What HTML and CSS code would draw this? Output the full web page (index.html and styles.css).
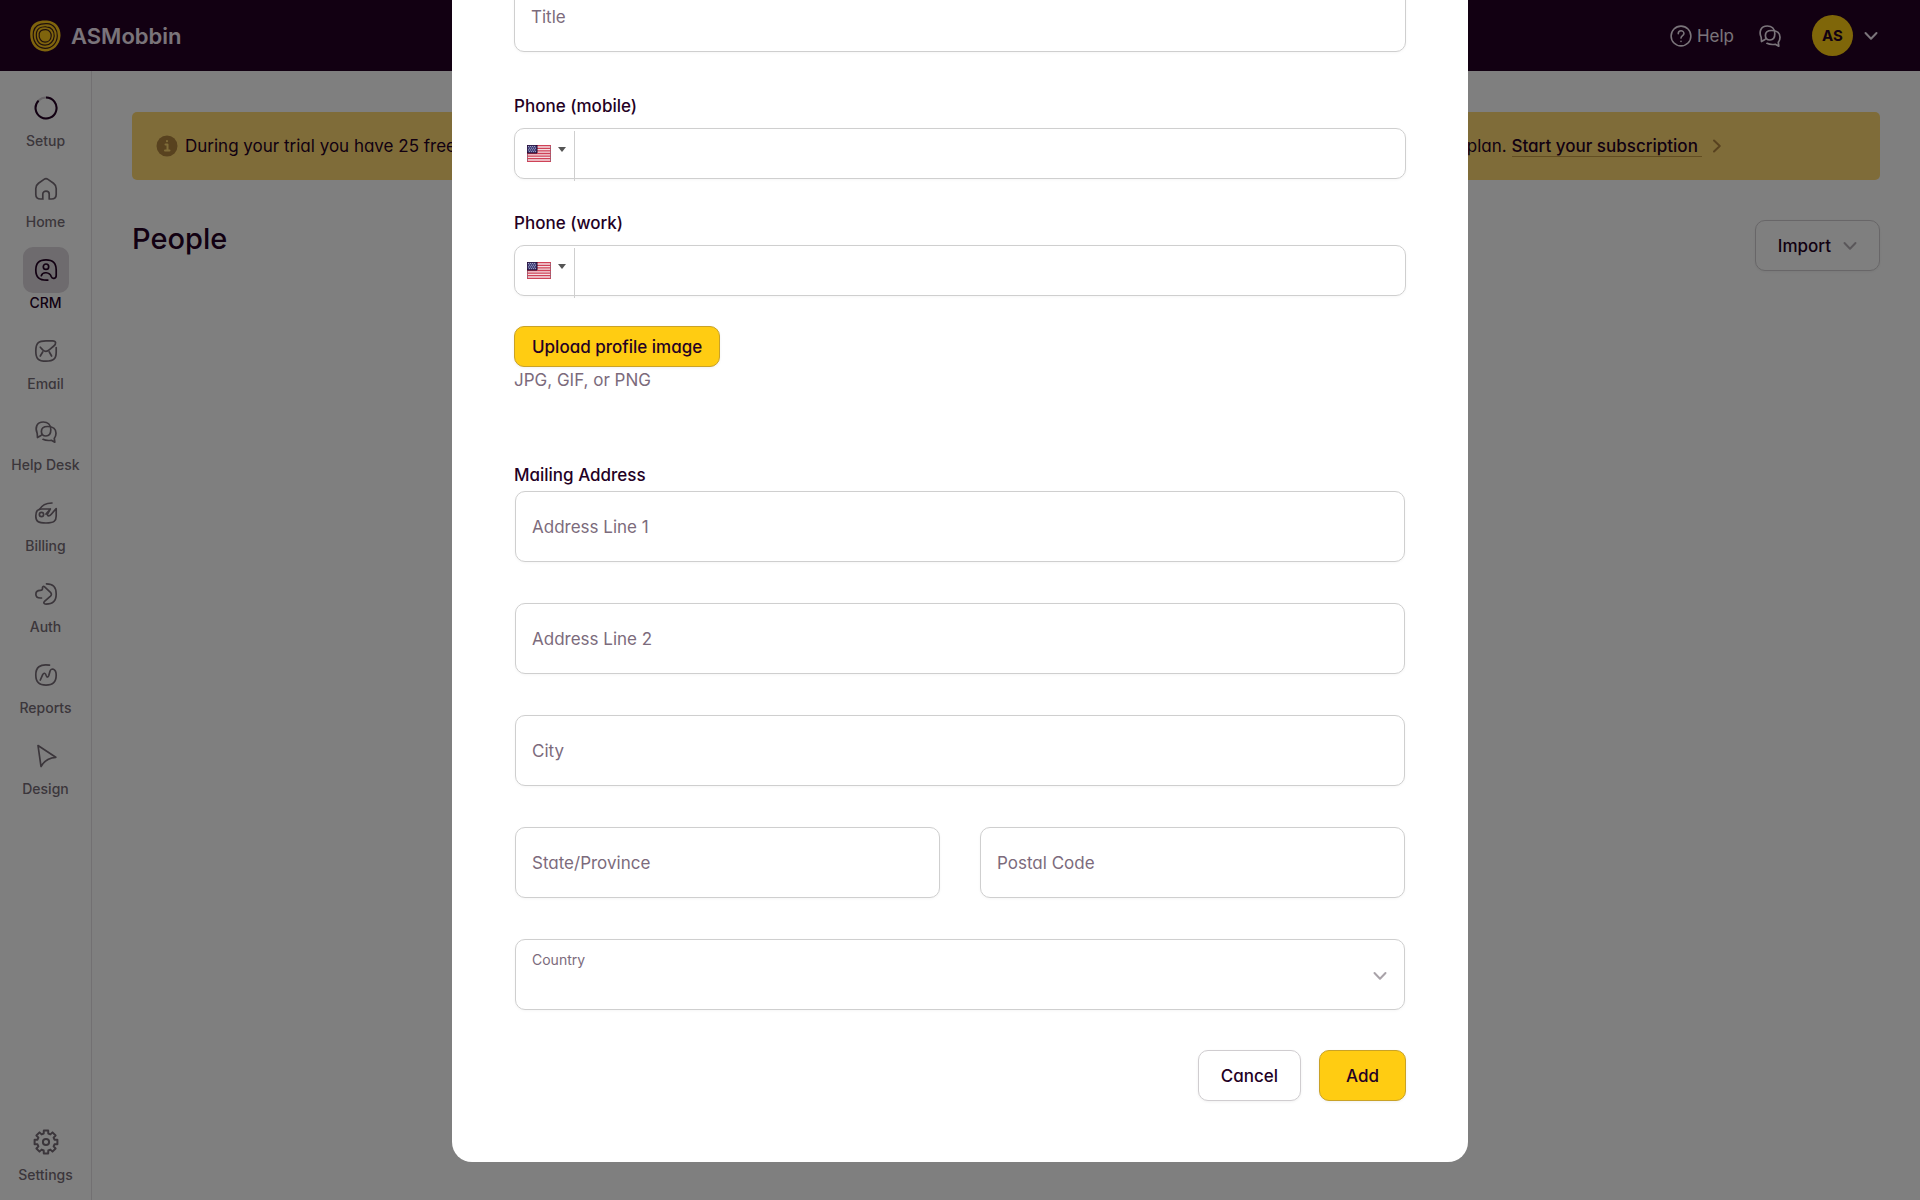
FILE: index.html
```html
<!DOCTYPE html>
<html lang="en">
<head>
    <meta charset="UTF-8">
    <meta name="viewport" content="width=device-width, initial-scale=1.0">
    <title>People - ASMobbin</title>
    <link rel="stylesheet" href="styles.css">
</head>
<body>

    <!-- Shared icons -->
    <svg class="sprite" aria-hidden="true">
        <symbol id="chat" viewBox="0 0 24 24">
            <path d="M7 15.5L3.5 17.5L3.2 13.5C.8 8 2.5 2 9.3 2C13.5 2 16.8 4.5 16.8 9.8C16.8 13.8 15 16 12 16C9 16 7.4 14 7.4 11.5C7.4 8.5 9.5 6.5 13.5 6.5C19.5 6.5 22 9.5 22 13.3C22 15.5 21.5 17 20.3 18.3L20.8 22.2L17.3 20.3C14 20.8 11.5 20.6 9 19.3"/>
        </symbol>
        <symbol id="down" viewBox="0 0 14 14">
            <path d="M1.5 4L7 9.8L12.5 4"/>
        </symbol>
        <symbol id="flag" viewBox="0 0 24 17">
            <rect width="24" height="17" fill="#f4dfe2"/>
            <path d="M0 .7H24M0 3.3H24M0 5.9H24M0 8.5H24M0 11.1H24M0 13.7H24M0 16.3H24" stroke="#cf4257" stroke-width="1.3"/>
            <rect width="10" height="8" fill="#43437c"/>
            <path d="M1 1.5H9M2 3.2H9M1 4.9H9M2 6.6H9" stroke="#b9b9d4" stroke-width=".8" stroke-dasharray="1 1"/>
        </symbol>
    </svg>

    <header class="topbar">
        <a class="brand" href="#">
            <svg class="logo" viewBox="-16 -16 32 32">
                <path class="logo-fill" d="M-14.5-6C-13-14-5-16 2-15.500C11-15 16-8 15.500 0C15 9 8 15.500 0 15.500C-10 15-16.500 6-14.500-6Z"/>
                <g class="logo-rings">
                    <path d="M-11.500-4.500C-10-11-4-12.500 2-12.300C9-12 12.500-6 12.300 0C12 7 7 12.400 0 12.300C-8 12-13 5-11.500-4.500Z"/>
                    <path d="M-8.500-3.500C-7.500-8-3-9.500 1.500-9.200C6.500-9 9.400-5 9.200 0C9 5 5 9.300 0 9.200C-6 9-9.600 4-8.500-3.500Z"/>
                    <path d="M-5.800-2.500C-5-5.500-2-6.400 1-6.300C4.500-6 6.400-3 6.200 0C6 3.500 3.500 6.200 0 6.200C-4 6-6.500 2.500-5.800-2.500Z"/>
                </g>
            </svg>
            ASMobbin
        </a>
        <nav class="tools">
            <a class="help" href="#">
                <svg class="icon" viewBox="0 0 24 24">
                    <circle cx="12" cy="12" r="10.800"/>
                    <path d="M9 9.500C9 5.300 15.200 5.400 15.200 9.300C15.200 11.700 12 11.700 12 14.300"/>
                    <path d="M12 17.800V18"/>
                </svg>
                Help
            </a>
            <a class="chat" href="#" aria-label="Messages"><svg class="icon"><use href="#chat"/></svg></a>
            <button class="account" type="button" aria-label="Account">
                <span class="avatar">AS</span>
                <svg class="chevron"><use href="#down"/></svg>
            </button>
        </nav>
    </header>

    <div class="layout">
        <nav class="sidebar">
            <a class="item" href="#">
                <span class="item-icon">
                    <svg class="icon setup" viewBox="0 0 24 24">
                        <circle class="track" cx="12" cy="12" r="10.500"/>
                        <path d="M12 1.500A10.500 10.500 0 1 1 4.600 4.600"/>
                    </svg>
                </span>
                Setup
            </a>
            <a class="item" href="#">
                <span class="item-icon">
                    <svg class="icon" viewBox="0 0 24 24">
                        <path d="M9 22H6.500C3.500 22 1.800 20.500 1.800 17.500V11.500C1.800 9 2.800 7.600 4.500 6.300L10 2.400C11.300 1.500 12.700 1.500 14 2.400L19.500 6.300C21.200 7.600 22.200 9 22.200 11.500V17.500C22.200 20.500 20.500 22 17.500 22H15.200V17C15.200 13.200 8.800 13.200 8.800 17V22"/>
                    </svg>
                </span>
                Home
            </a>
            <a class="item active" href="#">
                <span class="item-icon">
                    <svg class="icon" viewBox="0 0 24 24">
                        <circle cx="12" cy="8.700" r="2.700"/>
                        <path d="M13.800 22.100C5 22.500 1.800 19 1.800 12C1.800 5 5 1.800 12 1.800C19 1.800 22.200 5 22.200 12V17.500C22.200 20.800 18.300 21.500 17.200 18.500C15.600 13.800 8.600 13.500 7.300 17.700"/>
                    </svg>
                </span>
                CRM
            </a>
            <a class="item" href="#">
                <span class="item-icon">
                    <svg class="icon" viewBox="0 0 24 24">
                        <path d="M22.200 8.500V13C22.200 20 19.500 22.200 12 22.200C4.500 22.200 1.800 20 1.800 12C1.800 4 4.500 1.800 12 1.800H18.500C22.500 1.800 22.300 5 19.800 7L15.500 10.700C13 13 11 13 8.700 10.900L6.300 8.200M6.300 17L8.700 13M17.600 17L15.300 13"/>
                    </svg>
                </span>
                Email
            </a>
            <a class="item" href="#">
                <span class="item-icon"><svg class="icon"><use href="#chat"/></svg></span>
                Help Desk
            </a>
            <a class="item" href="#">
                <span class="item-icon">
                    <svg class="icon" viewBox="0 0 24 24">
                        <circle cx="7.500" cy="13.500" r="2.100"/>
                        <path d="M5.500 8.500C8 4 11 2.200 18 2"/>
                        <path d="M12 13L16.300 8H8C3.500 8 1.800 10 1.800 15C1.800 20.500 4 22 12 22C20 22 22.200 20 22.200 15V7.500L17.300 13.200C15.500 15.300 13 15.500 13.500 13L16.300 8"/>
                    </svg>
                </span>
                Billing
            </a>
            <a class="item" href="#">
                <span class="item-icon">
                    <svg class="icon" viewBox="0 0 24 24">
                        <path d="M7.500 16H6.300C.4 16 .4 8.400 6.300 8.400C8 8.400 8.500 8 8.500 6.800V5.600C8.500 4.400 9.700 4 10.600 4.800L16.500 10.300C17.700 11.500 17.700 12.900 16.500 14.100L10.500 19.300C9.200 20.500 9.800 22.200 12 22.200C19 22.200 22.200 19 22.200 12C22.200 5 19 1.800 12.500 1.800"/>
                    </svg>
                </span>
                Auth
            </a>
            <a class="item" href="#">
                <span class="item-icon">
                    <svg class="icon" viewBox="0 0 24 24">
                        <path d="M15.500 2.200C5.500 .8 1.800 4.500 1.800 12C1.800 19 5 22.200 12 22.200C19 22.200 22.200 19 22.200 12C22.200 5.500 17 4.300 15.900 8.500L14.800 12.500C14.200 14.500 13 14.500 12.300 12.700C11.300 9.800 9.800 9.500 8.700 11.700L6.300 17"/>
                    </svg>
                </span>
                Reports
            </a>
            <a class="item" href="#">
                <span class="item-icon">
                    <svg class="icon" viewBox="0 0 24 24">
                        <path d="M4 1.500L21.800 13.300C16 13.800 10.500 16 7 22.500Z"/>
                    </svg>
                </span>
                Design
            </a>
            <a class="item settings" href="#">
                <span class="item-icon">
                    <svg class="icon gear" viewBox="-13 -13 26 26">
                        <circle r="3.100"/>
                        <path d="M8.500-2.300L11.400-2.200V2.200L8.500 2.300L7.600 4.400L9.600 6.500L6.500 9.600L4.400 7.600L2.300 8.500L2.200 11.400H-2.200L-2.300 8.500L-4.400 7.600L-6.500 9.600L-9.600 6.500L-7.600 4.400L-8.500 2.300L-11.400 2.200V-2.200L-8.500-2.300L-7.600-4.400L-9.600-6.500L-6.500-9.600L-4.400-7.600L-2.300-8.500L-2.200-11.400H2.200L2.300-8.500L4.400-7.600L6.500-9.600L9.600-6.500L7.600-4.400Z"/>
                    </svg>
                </span>
                Settings
            </a>
        </nav>

        <main class="content">
            <div class="banner">
                <svg class="info" viewBox="0 0 22 22">
                    <circle cx="11" cy="11" r="10.500"/>
                    <path d="M9.500 9.500H11.500V15.500M9 15.500H13.500M11 6V6.300"/>
                </svg>
                <p>During your trial you have 25 free emails you can send to your contacts. To send unlimited emails and remove these limits, you will need to subscribe to a paid plan. <a href="#">Start your subscription&nbsp;</a></p>
                <svg class="chevron next"><use href="#down"/></svg>
            </div>
            <div class="page-head">
                <h1>People</h1>
                <button class="btn import" type="button">Import <svg class="chevron"><use href="#down"/></svg></button>
            </div>
        </main>
    </div>

    <!-- Add person dialog -->
    <div class="overlay">
        <form class="modal" role="dialog" aria-label="Add person">
            <input class="field" type="text" placeholder="Title" aria-label="Title">

            <div class="phones">
                <div>
                    <label for="mobile">Phone (mobile)</label>
                    <div class="phone">
                        <button class="country-code" type="button" aria-label="United States">
                            <svg class="flag"><use href="#flag"/></svg>
                            <span class="caret"></span>
                        </button>
                        <input type="tel" id="mobile">
                    </div>
                </div>
                <div>
                    <label for="work">Phone (work)</label>
                    <div class="phone">
                        <button class="country-code" type="button" aria-label="United States">
                            <svg class="flag"><use href="#flag"/></svg>
                            <span class="caret"></span>
                        </button>
                        <input type="tel" id="work">
                    </div>
                </div>
            </div>

            <button class="btn primary upload" type="button">Upload profile image</button>
            <p class="hint">JPG, GIF, or PNG</p>

            <fieldset class="address">
                <legend>Mailing Address</legend>
                <div class="address-grid">
                    <input class="field wide" type="text" placeholder="Address Line 1" aria-label="Address Line 1">
                    <input class="field wide" type="text" placeholder="Address Line 2" aria-label="Address Line 2">
                    <input class="field wide" type="text" placeholder="City" aria-label="City">
                    <input class="field" type="text" placeholder="State/Province" aria-label="State/Province">
                    <input class="field" type="text" placeholder="Postal Code" aria-label="Postal Code">
                    <div class="country wide">
                        <label for="country">Country</label>
                        <select class="field" id="country">
                            <option></option>
                        </select>
                        <svg class="chevron"><use href="#down"/></svg>
                    </div>
                </div>
            </fieldset>

            <div class="actions">
                <button class="btn" type="button">Cancel</button>
                <button class="btn primary add" type="submit">Add</button>
            </div>
        </form>
    </div>

</body>
</html>
```
FILE: styles.css
```css
* {
    box-sizing: border-box;
}
body {
    margin: 0;
    min-height: 100vh;
    display: flex;
    flex-direction: column;
    font-family: Inter, sans-serif;
    font-feature-settings: "cv11";
    font-size: 17px;
    line-height: 24px;
    color: #240024;
    background: #fff;
}
a {
    color: inherit;
    text-decoration: none;
}
button, input, select {
    font: inherit;
    font-feature-settings: inherit;
    color: inherit;
}
svg {
    fill: none;
    stroke: currentColor;
    stroke-linecap: round;
    stroke-linejoin: round;
    flex-shrink: 0;
}
.sprite {
    display: none;
}
.icon {
    width: 24px;
    height: 24px;
    stroke-width: 1.7;
}
.chevron {
    width: 14px;
    height: 14px;
    stroke-width: 2;
}

/* Top bar */
.topbar {
    display: flex;
    align-items: center;
    justify-content: space-between;
    height: 71px;
    padding: 0 42px 0 29px;
    background: #240024;
    color: #f5e9f5;
}
.brand {
    display: flex;
    align-items: center;
    gap: 10px;
    font-size: 22px;
    font-weight: 600;
}
.logo {
    width: 32px;
    height: 32px;
}
.logo-fill {
    fill: #ffc81a;
    stroke: none;
}
.logo-rings {
    stroke: #3d1f1a;
    stroke-width: 1.2;
}
.tools, .help, .account {
    display: flex;
    align-items: center;
}
.help {
    gap: 5px;
}
.help .icon {
    width: 22px;
    height: 22px;
}
.chat {
    display: flex;
    margin: 0 30px 0 24px;
}
.account {
    gap: 11px;
    padding: 0;
    border: none;
    background: none;
}
.avatar {
    width: 41px;
    border-radius: 50%;
    background: #ffcc12;
    color: #240024;
    font-size: 15px;
    font-weight: 700;
    line-height: 41px;
    text-align: center;
}

/* Sidebar */
.layout {
    flex: 1;
    display: flex;
}
.sidebar {
    width: 92px;
    display: flex;
    flex-direction: column;
    gap: 15px;
    padding: 14px 0 15px;
    border-right: 1px solid #e4e0e4;
}
.item {
    display: flex;
    flex-direction: column;
    align-items: center;
    color: #776d77;
    font-size: 14px;
    font-weight: 500;
    line-height: 20px;
}
.item-icon {
    display: flex;
    align-items: center;
    justify-content: center;
    width: 46px;
    height: 46px;
    border-radius: 10px;
}
.item.active {
    color: #240024;
}
.item.active .item-icon {
    background: #dcd6dc;
}
.setup {
    color: #240024;
    stroke-width: 2;
    stroke-linecap: butt;
}
.track {
    stroke: #cfc9cf;
}
.gear {
    width: 26px;
    height: 26px;
    stroke-width: 2;
}
.settings {
    margin-top: auto;
}

/* Page content */
.content {
    flex: 1;
    padding: 41px 40px 0;
}
.banner {
    display: flex;
    align-items: center;
    min-height: 68px;
    padding: 0 24px;
    border-radius: 5px;
    background: #ffd973;
}
.info {
    width: 22px;
    height: 22px;
    margin-right: 7px;
    stroke: #ffd973;
    stroke-width: 2;
}
.info circle {
    fill: #b0853f;
    stroke: none;
}
.banner p {
    margin: 0;
    white-space: nowrap;
}
.banner a {
    font-weight: 500;
    border-bottom: 1px solid #c79d45;
}
.next {
    margin-left: 8px;
    color: #b0853f;
    transform: rotate(-90deg);
}
.page-head {
    display: flex;
    align-items: flex-start;
    justify-content: space-between;
    padding-top: 40px;
}
h1 {
    margin: 0;
    font-size: 29px;
    font-weight: 500;
    line-height: 38px;
}
.btn {
    height: 51px;
    padding: 0 22px;
    border: 1px solid #d0cdd0;
    border-radius: 10px;
    background: #fff;
    box-shadow: 0 1px 3px rgba(0, 0, 0, 0.06);
    font-weight: 500;
}
.import {
    display: flex;
    align-items: center;
    gap: 12px;
}
.import .chevron {
    color: #b5afb5;
}

/* Dialog */
.overlay {
    position: fixed;
    inset: 0;
    display: flex;
    align-items: flex-end;
    justify-content: center;
    padding-bottom: 38px;
    overflow: hidden;
    background: rgba(0, 0, 0, 0.5);
}
.modal {
    width: 100%;
    max-width: 1016px;
    padding: 61px 62px;
    border-radius: 20px;
    background: #fff;
}
.field {
    display: block;
    width: 100%;
    height: 71px;
    padding: 0 16px;
    border: 1px solid #cfcfcf;
    border-radius: 10px;
    background: #fff;
    box-shadow: 0 1px 3px rgba(0, 0, 0, 0.04);
}
.field::placeholder {
    color: #7c6b7c;
    opacity: 1;
}
.phones {
    display: grid;
    gap: 32px;
    margin: 42px 0 30px;
    font-weight: 500;
}
.phones label {
    display: block;
    margin-bottom: 10px;
}
.phone {
    display: flex;
    height: 51px;
    border: 1px solid #cfcfcf;
    border-radius: 10px;
    box-shadow: 0 1px 3px rgba(0, 0, 0, 0.04);
}
.phone input {
    flex: 1;
    padding: 0 16px;
    border: none;
    background: none;
}
/* the divider runs slightly past the bottom border */
.country-code {
    display: flex;
    gap: 7px;
    height: 50px;
    width: 60px;
    margin-top: 2px;
    padding: 14px 0 0 12px;
    border: none;
    border-right: 1px solid #cfcfcf;
    background: none;
}
.flag {
    width: 24px;
    height: 17px;
    stroke-linecap: butt;
}
.caret {
    margin-top: 2px;
    border: 4px solid transparent;
    border-top: 5px solid #555;
    border-bottom: none;
}
.upload {
    display: block;
    height: 41px;
    padding: 0 17px;
}
.primary {
    border-color: #c9a227;
    background: #ffcc12;
}
.hint {
    margin: 1px 0 71px;
    color: #7c6b7c;
}
.address {
    margin: 0;
    padding: 0;
    border: none;
}
legend {
    padding: 0 0 4px;
    font-weight: 500;
}
.address-grid {
    display: grid;
    grid-template-columns: 1fr 1fr;
    gap: 41px 40px;
    padding: 0 1px;
}
.wide {
    grid-column: 1 / -1;
}
.country {
    position: relative;
}
.country label {
    position: absolute;
    top: 11px;
    left: 17px;
    color: #7c6b7c;
    font-size: 14px;
    line-height: 20px;
}
.country select {
    appearance: none;
}
.country .chevron {
    position: absolute;
    top: 30px;
    right: 18px;
    color: #a9a3a9;
}
.actions {
    display: flex;
    justify-content: flex-end;
    gap: 18px;
    margin-top: 40px;
}
.add {
    padding: 0 26px;
}
```
